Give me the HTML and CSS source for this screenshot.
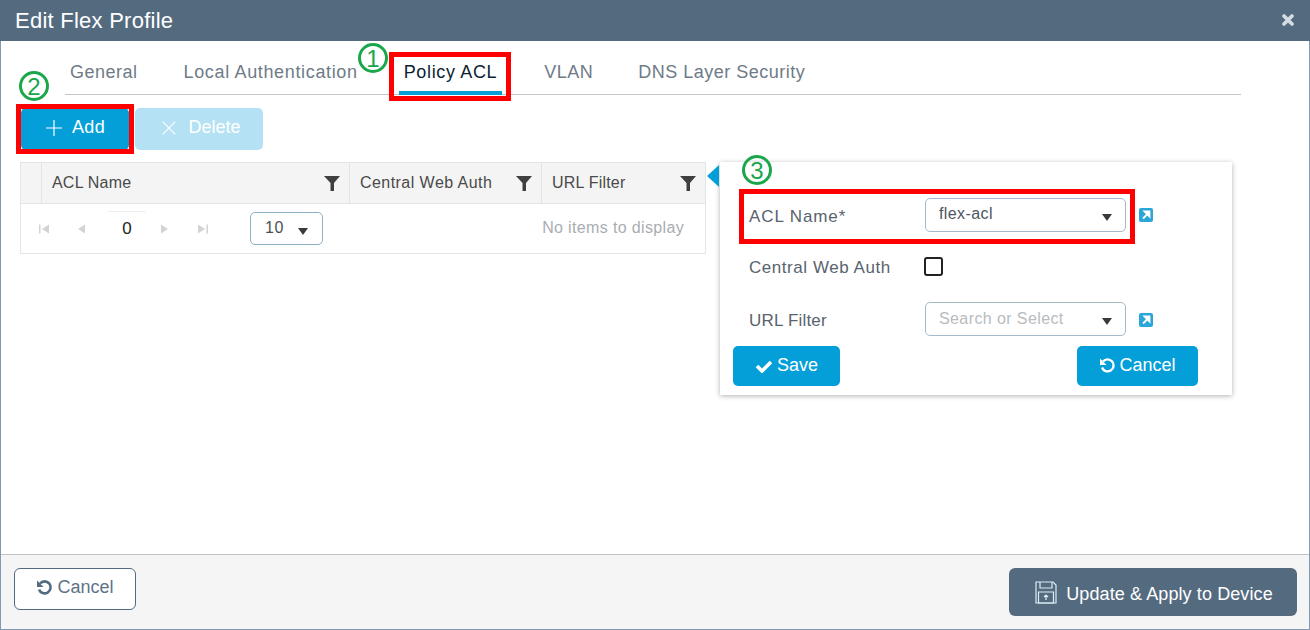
FILE: index.html
```html
<!DOCTYPE html>
<html lang="en">
<head>
    <meta charset="UTF-8">
    <meta name="viewport" content="width=device-width, initial-scale=1.0">
    <title>Edit Flex Profile</title>
    <link rel="stylesheet" href="styles.css">
</head>
<body>
    <div class="modal">
        <header class="modal-head">
            <h1>Edit Flex Profile</h1>
            <svg class="close-icon" width="12" height="12" viewBox="0 0 12 12"><path d="M2 2 L10 10 M10 2 L2 10" stroke="#d5dde4" stroke-width="3.6" stroke-linecap="round"/></svg>
        </header>

        <main class="modal-body">
            <nav class="tabs">
                <a class="tab tab-first">General</a>
                <a class="tab tab-wide">Local Authentication</a>
                <a class="tab active">Policy ACL</a>
                <a class="tab">VLAN</a>
                <a class="tab">DNS Layer Security</a>
            </nav>

            <div class="toolbar">
                <button class="btn btn-add">
                    <svg width="18" height="18" viewBox="0 0 18 18"><path d="M9 1 V17 M1 9 H17" stroke="#fff" stroke-width="1.2"/></svg>
                    Add
                </button>
                <button class="btn btn-delete">
                    <svg width="14" height="14" viewBox="0 0 16 16"><path d="M1 1 L15 15 M15 1 L1 15" stroke="#fff" stroke-width="1.3"/></svg>
                    Delete
                </button>
            </div>

            <div class="content">
                <div class="grid">
                    <div class="grid-head">
                        <div class="cell cell-blank"></div>
                        <div class="cell cell-name">ACL Name
                            <svg class="funnel" width="16" height="17" viewBox="0 0 16 17"><path d="M0 1 H16 L10 8 V16 L6.500 16 V8 Z" fill="#3f3f3f"/></svg>
                        </div>
                        <div class="cell cell-web">Central Web Auth
                            <svg class="funnel" width="16" height="17" viewBox="0 0 16 17"><path d="M0 1 H16 L10 8 V16 L6.500 16 V8 Z" fill="#3f3f3f"/></svg>
                        </div>
                        <div class="cell cell-url">URL Filter
                            <svg class="funnel" width="16" height="17" viewBox="0 0 16 17"><path d="M0 1 H16 L10 8 V16 L6.500 16 V8 Z" fill="#3f3f3f"/></svg>
                        </div>
                    </div>
                    <div class="pager">
                        <svg class="page-arrows" width="32" height="12" viewBox="0 0 32 12">
                            <path d="M1 1.500 H2.500 V10.500 H1 Z M11 1.500 V10.500 L4 6 Z" fill="#d3d3d3"/>
                        </svg>
                        <svg class="page-arrow" width="10" height="12" viewBox="0 0 10 12"><path d="M9 1.500 V10.500 L2 6 Z" fill="#d3d3d3"/></svg>
                        <span class="page-num">0</span>
                        <svg class="page-arrow" width="10" height="12" viewBox="0 0 10 12"><path d="M1 1.500 V10.500 L8 6 Z" fill="#d3d3d3"/></svg>
                        <svg class="page-last" width="12" height="12" viewBox="0 0 12 12"><path d="M1 1.500 V10.500 L8 6 Z M9.500 1.500 H11 V10.500 H9.500 Z" fill="#d3d3d3"/></svg>
                        <div class="page-size">10 <span class="caret"></span></div>
                        <span class="no-items">No items to display</span>
                    </div>
                </div>

                <div class="edit-panel">
                    <span class="panel-arrow"></span>
                    <div class="form-row row-acl">
                        <label>ACL Name*</label>
                        <div class="select">flex-acl <span class="caret"></span></div>
                        <span class="ext-link"><svg width="10" height="10" viewBox="0 0 10 10"><path d="M2 8.500 L7.500 3 M3.500 1.500 H8.500 V6.500 Z" stroke="#fff" stroke-width="1.800" fill="#fff"/></svg></span>
                    </div>
                    <div class="form-row row-check">
                        <label>Central Web Auth</label>
                        <span class="checkbox"></span>
                    </div>
                    <div class="form-row row-url">
                        <label>URL Filter</label>
                        <div class="select placeholder">Search or Select <span class="caret"></span></div>
                        <span class="ext-link"><svg width="10" height="10" viewBox="0 0 10 10"><path d="M2 8.500 L7.500 3 M3.500 1.500 H8.500 V6.500 Z" stroke="#fff" stroke-width="1.800" fill="#fff"/></svg></span>
                    </div>
                    <div class="form-actions">
                        <button class="btn btn-save">
                            <svg width="18" height="14" viewBox="0 0 18 14"><path d="M2 7 L7 12 L16 3" stroke="#fff" stroke-width="3.600" fill="none"/></svg>
                            Save
                        </button>
                        <button class="btn btn-cancel">
                            <svg width="17" height="17" viewBox="0 0 17 17"><path d="M4 4.500 A6 6 0 1 1 3 10.500" stroke="#fff" stroke-width="2.400" fill="none"/><path d="M1 1.500 L7.500 8 H1 Z" fill="#fff"/></svg>
                            Cancel
                        </button>
                    </div>
                </div>
            </div>
        </main>

        <footer class="modal-foot">
            <button class="btn-outline">
                <svg width="17" height="17" viewBox="0 0 17 17"><path d="M4 4.500 A6 6 0 1 1 3 10.500" stroke="#546b7f" stroke-width="2.600" fill="none"/><path d="M1 1.500 L7.500 8 H1 Z" fill="#546b7f"/></svg>
                Cancel
            </button>
            <button class="btn-apply">
                <svg width="22" height="23" viewBox="0 0 22 23" fill="none" stroke="#d9eef6" stroke-width="1.200">
                    <path d="M1 1 H18 L21 4 V22 H1 Z"/>
                    <path d="M5 1 V7 H17 V1"/>
                    <path d="M3.500 11 H18.500 V22 H3.500 Z"/>
                    <path d="M11 19 V14 M9 16 L11 14 L13 16"/>
                </svg>
                Update &amp; Apply to Device
            </button>
        </footer>

        <!-- annotations drawn over the screenshot -->
        <span class="mark mark-tab"></span>
        <span class="mark mark-add"></span>
        <span class="mark mark-acl"></span>
        <span class="step step-1">1</span>
        <span class="step step-2">2</span>
        <span class="step step-3">3</span>
    </div>
</body>
</html>
```

FILE: styles.css
```css
*{
    padding: 0px;
    margin: 0px;
    box-sizing: border-box;
}
body{
    width: 1310px;
    height: 630px;
    overflow: hidden;
    font-family: "Liberation Sans", Arial, sans-serif;
    color: #4a4f54;
    background: #fff;
}
button{
    font-family: inherit;
    border: none;
}
.modal{
    position: relative;
    display: flex;
    flex-direction: column;
    height: 630px;
    border: 1px solid #7f9ab5;
    border-top: none;
}
.modal-head{
    flex: none;
    display: flex;
    justify-content: space-between;
    align-items: center;
    height: 41px;
    margin: 0 -1px;
    padding: 0 16px 0 15px;
    background: #546b7f;
}
.modal-head h1{
    font-size: 22px;
    font-weight: normal;
    color: #fff;
    letter-spacing: 0.25px;
}
.close-icon{
    margin-top: -2px;
}
.modal-body{
    flex: 1;
    padding: 0 19px;
}

/* tabs */
.tabs{
    display: flex;
    height: 54px;
    margin: 0 49px 0 45px;
    padding-left: 5px;
    border-bottom: 1px solid #c3c6c9;
}
.tab{
    height: 53px;
    padding: 21px 0 0;
    margin-right: 45px;
    font-size: 18px;
    letter-spacing: 0.5px;
    color: #6e7b87;
}
.tab-first{
    margin-right: 46px;
}
.tab-wide{
    letter-spacing: 0.65px;
}
.tab.active{
    margin: 0 42px 0 -4px;
    padding: 21px 5px 0;
    height: 54px;
    letter-spacing: 0.65px;
    color: #0b1f33;
    border-bottom: 4px solid #049fd9;
}

/* buttons */
.toolbar{
    display: flex;
    gap: 1px;
    margin: 13px 0 12px 1px;
}
.btn{
    display: flex;
    align-items: center;
    justify-content: center;
    gap: 9px;
    height: 42px;
    padding-bottom: 3px;
    font-size: 18px;
    color: #fff;
    background: #049fd9;
    border-radius: 5px;
}
.btn-add{
    width: 108px;
    letter-spacing: 0.3px;
}
.btn-delete{
    width: 128px;
    margin-left: 5px;
    padding-left: 5px;
    gap: 12px;
    background: #b4e2f4;
}

.content{
    display: flex;
    align-items: flex-start;
    gap: 14px;
}

/* grid */
.grid{
    width: 686px;
    height: 92px;
    border: 1px solid #e3e4e6;
}
.grid-head{
    display: flex;
    height: 41px;
    background: #f4f4f4;
    border-bottom: 1px solid #e3e4e6;
}
.cell{
    display: flex;
    align-items: center;
    justify-content: space-between;
    padding: 0 9px 0 10px;
    font-size: 16px;
    letter-spacing: 0.2px;
    color: #4a4a4a;
    border-right: 1px solid #e3e4e6;
}
.cell-blank{
    width: 21px;
}
.cell-name{
    width: 308px;
}
.cell-web{
    width: 192px;
    letter-spacing: 0.45px;
}
.cell-url{
    flex: 1;
    border-right: none;
}
.pager{
    display: flex;
    align-items: center;
    height: 49px;
    padding-left: 17px;
}
.page-arrows{
    width: 32px;
    margin-right: 6px;
}
.page-num{
    width: 38px;
    height: 36px;
    margin: 0 14px 0 22px;
    line-height: 33px;
    text-align: center;
    font-size: 17px;
    color: #222;
    border-top: 1px solid #eee;
}
.page-last{
    margin-left: 27px;
}
.page-size{
    display: flex;
    align-items: center;
    gap: 14px;
    width: 73px;
    height: 33px;
    margin-left: 41px;
    padding: 0 0 2px 14px;
    font-size: 16px;
    letter-spacing: 0.5px;
    border: 1px solid #8fb0c4;
    border-radius: 5px;
}
.no-items{
    margin-left: auto;
    padding: 0 21px 2px 0;
    font-size: 16px;
    letter-spacing: 0.35px;
    color: #a9adb1;
}
.caret{
    width: 0;
    height: 0;
    margin-top: 7px;
    border-style: solid;
    border-width: 7px 5px 0;
    border-color: #3a3a3a transparent transparent;
}

/* side panel */
.edit-panel{
    position: relative;
    flex: none;
    width: 512px;
    height: 233px;
    padding: 0 29px;
    background: #fff;
    box-shadow: 0 1px 5px rgba(0, 0, 0, 0.3);
}
.panel-arrow{
    position: absolute;
    left: -13px;
    top: 3px;
    border-style: solid;
    border-width: 11px 12px 11px 0;
    border-color: transparent #049fd9 transparent transparent;
}
.form-row{
    display: flex;
    align-items: center;
    height: 34px;
    margin-top: 36px;
    font-size: 17px;
    letter-spacing: 0.4px;
    color: #58636d;
}
.row-acl label{
    letter-spacing: 0.9px;
}
.row-check{
    margin-top: 17px;
    letter-spacing: 0.55px;
}
.row-url{
    margin-top: 19px;
    letter-spacing: 0.2px;
}
.form-row label{
    width: 176px;
    padding-top: 3px;
}
.select{
    display: flex;
    justify-content: space-between;
    align-items: center;
    width: 201px;
    height: 34px;
    padding: 0 13px 3px;
    font-size: 16px;
    letter-spacing: 0.4px;
    color: #4d5660;
    border: 1px solid #a5bac8;
    border-radius: 5px;
}
.select .caret{
    margin-top: 7px;
}
.placeholder{
    padding-bottom: 1px;
    letter-spacing: 0.4px;
    color: #b8bcc0;
}
.placeholder .caret{
    margin-top: 5px;
}
.ext-link{
    display: flex;
    align-items: center;
    justify-content: center;
    width: 14px;
    height: 14px;
    margin-left: 13px;
    background: #2aa6d8;
    border-radius: 2px;
}
.row-url .ext-link{
    margin-top: 2px;
}
.checkbox{
    width: 19px;
    height: 19px;
    margin-left: -1px;
    border: 2px solid #222;
    border-radius: 3px;
}
.form-actions{
    display: flex;
    justify-content: space-between;
    margin: 10px 5px 0 -16px;
}
.btn-save{
    width: 107px;
    height: 40px;
    padding-bottom: 1px;
    gap: 4px;
}
.btn-cancel{
    width: 121px;
    height: 40px;
    padding-bottom: 1px;
    gap: 3px;
}

/* footer */
.modal-foot{
    flex: none;
    display: flex;
    justify-content: space-between;
    align-items: flex-start;
    height: 75px;
    padding: 13px 12px 0 13px;
    background: #f5f5f5;
    border-top: 1px solid #bcc3c9;
}
.btn-outline{
    display: flex;
    align-items: center;
    justify-content: center;
    gap: 4px;
    width: 122px;
    height: 42px;
    padding-bottom: 3px;
    font-size: 18px;
    color: #5d7388;
    background: #fff;
    border: 1px solid #546b7f;
    border-radius: 6px;
}
.btn-apply{
    display: flex;
    align-items: center;
    justify-content: center;
    gap: 9px;
    width: 288px;
    height: 48px;
    padding: 4px 0 0 2px;
    font-size: 18px;
    letter-spacing: 0.1px;
    color: #fff;
    background: #546b7f;
    border-radius: 6px;
}
.btn-apply svg{
    margin-top: -4px;
}

/* annotations */
.mark{
    position: absolute;
    border: 5px solid #ff0000;
}
.mark-tab{
    left: 388px;
    top: 52px;
    width: 122px;
    height: 49px;
}
.mark-add{
    left: 15px;
    top: 104px;
    width: 118px;
    height: 50px;
}
.mark-acl{
    left: 738px;
    top: 189px;
    width: 396px;
    height: 55px;
}
.step{
    position: absolute;
    width: 30px;
    height: 30px;
    font-size: 24px;
    line-height: 25px;
    text-align: center;
    color: #1aa64b;
    border: 3px solid #1aa64b;
    border-radius: 50%;
}
.step-1{
    left: 357px;
    top: 43px;
}
.step-2{
    left: 18px;
    top: 71px;
}
.step-3{
    left: 741px;
    top: 155px;
}
```
